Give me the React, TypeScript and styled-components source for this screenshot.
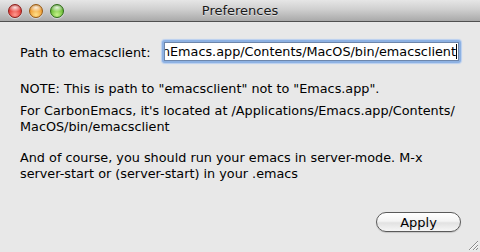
import styled, { createGlobalStyle } from "styled-components";

const Global = createGlobalStyle`
  html, body {
    margin: 0;
    padding: 0;
    background: #e8e8e8;
  }
  body {
    font-family: "DejaVu Sans", "Liberation Sans", sans-serif;
    -webkit-font-smoothing: antialiased;
  }
`;

const Window = styled.div`
  position: relative;
  width: 480px;
  height: 252px;
  display: flex;
  flex-direction: column;
  background: #e8e8e8;
  overflow: hidden;
`;

const TitleBar = styled.div`
  height: 21px;
  flex: none;
  display: flex;
  align-items: center;
  padding: 0 8px;
  background: linear-gradient(#e6e6e6 0%, #cfcfcf 45%, #a9a9a9 100%);
  border-bottom: 1px solid #505050;
  position: relative;
`;

const Lights = styled.div`
  display: flex;
  gap: 7px;
`;

const Light = styled.span<{ $c: string; $d: string; $l: string }>`
  width: 14px;
  height: 14px;
  border-radius: 50%;
  box-sizing: border-box;
  border: 1px solid ${(p) => p.$d};
  background:
    radial-gradient(ellipse 60% 35% at 50% 22%, rgba(255, 255, 255, 0.85), rgba(255, 255, 255, 0) 100%),
    radial-gradient(circle at 50% 80%, ${(p) => p.$l} 0%, ${(p) => p.$c} 55%, ${(p) => p.$d} 100%);
  box-shadow: 0 1px 1px rgba(255, 255, 255, 0.5);
`;

const Title = styled.div`
  position: absolute;
  left: 0;
  right: 0;
  text-align: center;
  font-size: 13px;
  color: #1a1a1a;
  text-shadow: 0 1px 0 rgba(255, 255, 255, 0.5);
  pointer-events: none;
`;

const Content = styled.div`
  flex: 1;
  display: flex;
  flex-direction: column;
  padding: 18px 19px 20px 20px;
  color: #000;
  font-size: 12.8px;
`;

const FieldRow = styled.div`
  display: flex;
  align-items: center;
  height: 23px;
`;

const Label = styled.span`
  width: 142px;
  flex: none;
  padding-top: 1px;
  white-space: nowrap;
`;

const Field = styled.div`
  flex: 1;
  min-width: 0;
  height: 23px;
  box-sizing: border-box;
  border-radius: 3px;
  padding: 2px;
  background: #8db1e2;
  box-shadow: 0 0 1px 1px #b9cff0;
  display: flex;
`;

const FieldInner = styled.div`
  flex: 1;
  min-width: 0;
  background: #fff;
  border: 1px solid #6d86ab;
  display: flex;
  justify-content: flex-end;
  align-items: center;
  overflow: hidden;
  padding-right: 1px;
`;

const FieldText = styled.span`
  flex: none;
  white-space: nowrap;
`;

const Caret = styled.span`
  width: 1px;
  height: 15px;
  background: #000;
  flex: none;
`;

const Para = styled.p<{ $gap: number }>`
  margin: ${(p) => p.$gap}px 0 0;
  line-height: 16px;
  white-space: nowrap;
`;

const Footer = styled.div`
  margin-top: auto;
  display: flex;
  justify-content: flex-end;
`;

const Button = styled.button`
  width: 85px;
  height: 20px;
  border-radius: 10px;
  border: 1px solid #5a5a5a;
  background: linear-gradient(#ffffff 0%, #f4f4f4 45%, #e2e2e2 55%, #f6f6f6 100%);
  box-shadow: 0 1px 1px rgba(0, 0, 0, 0.15);
  font-family: "DejaVu Sans", "Liberation Sans", sans-serif;
  font-size: 13px;
  color: #000;
  padding: 0;
`;

const Grip = styled.svg`
  position: absolute;
  right: 1px;
  bottom: 1px;
`;

export default function App() {
  return (
    <Window>
      <Global />
      <TitleBar>
        <Lights>
          <Light $c="#e5433d" $d="#8e1b17" $l="#ff9a8f" />
          <Light $c="#f1a33a" $d="#995a12" $l="#ffe08a" />
          <Light $c="#72c13d" $d="#2f6d17" $l="#c6f28a" />
        </Lights>
        <Title>Preferences</Title>
      </TitleBar>
      <Content>
        <FieldRow>
          <Label>Path to emacsclient:</Label>
          <Field>
            <FieldInner>
              <FieldText>/Applications/CarbonEmacs.app/Contents/MacOS/bin/emacsclient</FieldText>
              <Caret />
            </FieldInner>
          </Field>
        </FieldRow>
        <Para $gap={18}>NOTE: This is path to "emacsclient" not to "Emacs.app".</Para>
        <Para $gap={6}>
          For CarbonEmacs, it's located at /Applications/Emacs.app/Contents/
          <br />
          MacOS/bin/emacsclient
        </Para>
        <Para $gap={15}>
          And of course, you should run your emacs in server-mode. M-x
          <br />
          server-start or (server-start) in your .emacs
        </Para>
        <Footer>
          <Button>Apply</Button>
        </Footer>
      </Content>
      <Grip width="11" height="11" viewBox="0 0 11 11">
        <path d="M10 1 L1 10 M10 5 L5 10 M10 8 L8 10" stroke="#8a8a8a" strokeWidth="1" />
        <path d="M10 2 L2 10 M10 6 L6 10" stroke="#ffffff" strokeWidth="1" opacity="0.8" />
      </Grip>
    </Window>
  );
}
